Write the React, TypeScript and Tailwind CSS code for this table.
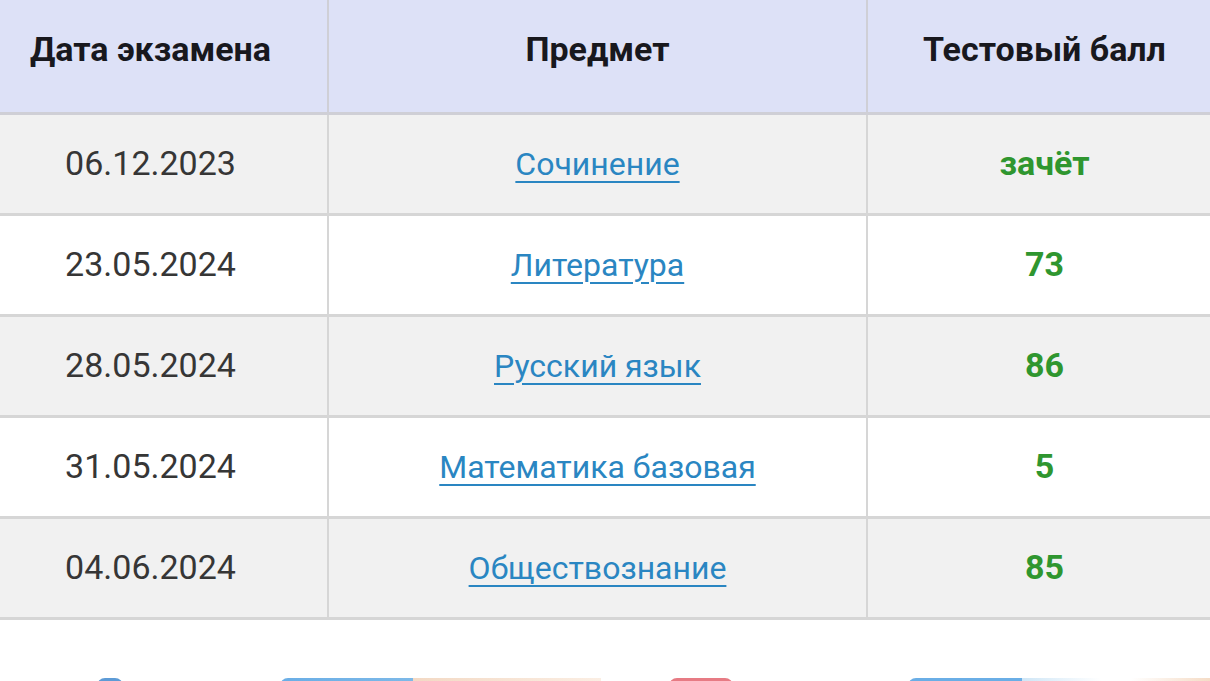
import React from 'react';

interface ExamRow {
  date: string;
  subject: string;
  score: string;
}

const rows: ExamRow[] = [
  { date: '06.12.2023', subject: 'Сочинение', score: 'зачёт' },
  { date: '23.05.2024', subject: 'Литература', score: '73' },
  { date: '28.05.2024', subject: 'Русский язык', score: '86' },
  { date: '31.05.2024', subject: 'Математика базовая', score: '5' },
  { date: '04.06.2024', subject: 'Обществознание', score: '85' },
];

const App: React.FC = () => {
  return (
    <div
      className="w-[1210px] h-[681px] overflow-hidden bg-white flex flex-col"
      style={{ fontFamily: 'Roboto, "Noto Sans", sans-serif' }}
    >
      <div className="ml-[-26px] w-[1247px]">
        <table className="w-full border-collapse table-fixed">
          <colgroup>
            <col className="w-[354px]" />
            <col className="w-[539px]" />
            <col className="w-[354px]" />
          </colgroup>
          <thead>
            <tr className="h-[113px] bg-[#dde1f7]">
              <th className="pb-[12px] border-b-[3px] border-r-2 border-[#cfcfd6] text-[34px] font-bold text-[#18181e] text-center">
                Дата экзамена
              </th>
              <th className="pb-[12px] border-b-[3px] border-r-2 border-[#cfcfd6] text-[34px] font-bold text-[#18181e] text-center">
                Предмет
              </th>
              <th className="pb-[12px] border-b-[3px] border-[#cfcfd6] text-[34px] font-bold text-[#18181e] text-center">
                Тестовый балл
              </th>
            </tr>
          </thead>
          <tbody>
            {rows.map((row, i) => (
              <tr key={row.date} className={`h-[101px] ${i % 2 === 0 ? 'bg-[#f1f1f1]' : 'bg-white'}`}>
                <td className="border-b-[3px] border-r-2 border-[#d6d6d6] text-center text-[34px] text-[#363636]">
                  {row.date}
                </td>
                <td className="border-b-[3px] border-r-2 border-[#d6d6d6] text-center text-[32px]">
                  <a
                    href="#"
                    className="text-[#2a86c2] underline decoration-2 underline-offset-[6px]"
                  >
                    {row.subject}
                  </a>
                </td>
                <td className="border-b-[3px] border-[#d6d6d6] text-center text-[34px] font-bold text-[#2f962f]">
                  {row.score}
                </td>
              </tr>
            ))}
          </tbody>
        </table>
      </div>

      {/* partially visible buttons at the bottom edge */}
      <div className="mt-auto flex items-start h-[3px] overflow-visible">
        <div className="ml-[97px] w-[26px] h-[12px] rounded-t-lg bg-[#5d9bd6]" />
        <div className="ml-[157px] w-[135px] h-[12px] rounded-tl-lg bg-gradient-to-r from-[#6aaee6] to-[#7db9e8]" />
        <div className="w-[190px] h-[12px] bg-gradient-to-r from-[#f3d9c4] to-[#fbeee3]" />
        <div className="ml-[68px] w-[65px] h-[12px] rounded-t-lg bg-[#e77b84]" />
        <div className="ml-[175px] w-[115px] h-[12px] rounded-tl-lg bg-[#6aaee6]" />
        <div className="w-[80px] h-[12px] bg-gradient-to-r from-[#cfe6f6] to-[#fff]" />
        <div className="ml-[30px] w-[80px] h-[12px] bg-gradient-to-r from-[#fff] to-[#f5dcc6]" />
      </div>
    </div>
  );
};

export default App;
